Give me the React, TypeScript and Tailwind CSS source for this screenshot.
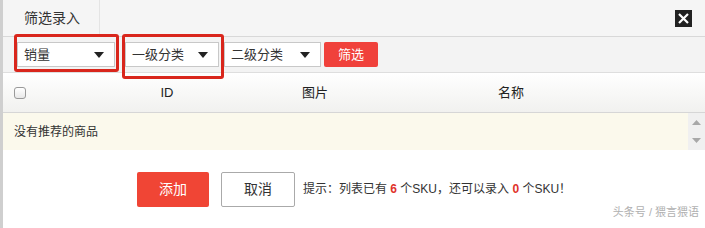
import React from "react";

const font = { fontFamily: '"Liberation Sans", "Noto Sans CJK SC", sans-serif' };

const Caret = () => (
  <svg width="10" height="6" viewBox="0 0 10 6" className="shrink-0">
    <path d="M0 0h10L5 6z" fill="#222" />
  </svg>
);

const Select = ({ label, width }: { label: string; width: string }) => (
  <div
    className={`flex h-[25px] ${width} items-center justify-between border border-[#c8c8c8] bg-white pl-[6px] pr-[10px] text-[13px] text-[#333]`}
  >
    <span>{label}</span>
    <Caret />
  </div>
);

export default function App() {
  return (
    <div className="flex h-[228px] w-[705px] bg-[#cfcfcf] text-[#333]" style={font}>
      <div className="ml-[3px] flex flex-1 flex-col bg-white">
        {/* header */}
        <div className="flex h-[37px] items-center justify-between border-b border-[#d8d8d8] bg-[#f5f5f5]">
          <div className="flex h-full w-[97px] items-center border-r border-[#e4e4e4] pl-[21px] text-[14px] text-[#333]">
            筛选录入
          </div>
          <div className="mr-[13px] flex h-[17px] w-[17px] items-center justify-center bg-[#222]">
            <svg width="11" height="11" viewBox="0 0 11 11">
              <path d="M1 1l9 9M10 1l-9 9" stroke="#fff" strokeWidth="2.2" />
            </svg>
          </div>
        </div>

        {/* filters */}
        <div className="flex h-[36px] items-center border-b border-[#dedede] bg-[#f3f3f3] pl-[14px]">
          <div className="relative">
            <Select label="销量" width="w-[98px]" />
            <div className="pointer-events-none absolute -left-[3px] -top-[8px] h-[38px] w-[105px] rounded-[3px] border-[3px] border-[#d9261c]" />
          </div>
          <div className="relative ml-[10px]">
            <Select label="一级分类" width="w-[94px]" />
            <div className="pointer-events-none absolute -left-[3px] -top-[8px] h-[45px] w-[102px] rounded-[3px] border-[3px] border-[#d9261c]" />
          </div>
          <div className="ml-[5px]">
            <Select label="二级分类" width="w-[97px]" />
          </div>
          <button className="ml-[3px] h-[25px] w-[54px] rounded-[2px] bg-[#f0413b] text-[13px] text-white">
            筛选
          </button>
        </div>

        {/* table header */}
        <div className="flex h-[40px] items-center border-b border-[#d6d6d6] bg-gradient-to-b from-white to-[#f1f1ef] text-[13px] text-[#222]">
          <div className="ml-[11px] h-[12px] w-[12px] rounded-[3px] border border-[#999] bg-gradient-to-b from-white to-[#e8e8e8]" />
          <div className="ml-[126px] w-[30px] text-center">ID</div>
          <div className="ml-[118px] w-[30px] text-center">图片</div>
          <div className="ml-[166px] w-[30px] text-center">名称</div>
        </div>

        {/* body */}
        <div className="flex h-[37px]">
          <div className="flex flex-1 items-center bg-[#fbf9ec] pl-[11px] text-[12px] text-[#333]">
            没有推荐的商品
          </div>
          <div className="flex w-[17px] flex-col items-center justify-between bg-[#f0f0f0] py-[7px]">
            <svg width="9" height="5" viewBox="0 0 9 5">
              <path d="M0 5h9L4.5 0z" fill="#a8a8a8" />
            </svg>
            <svg width="9" height="5" viewBox="0 0 9 5">
              <path d="M0 0h9L4.5 5z" fill="#a8a8a8" />
            </svg>
          </div>
        </div>

        {/* footer */}
        <div className="relative flex flex-1 items-center pl-[134px]">
          <button className="h-[35px] w-[72px] rounded-[2px] bg-[#f04535] text-[14px] text-white">
            添加
          </button>
          <button className="ml-[12px] h-[35px] w-[74px] rounded-[2px] border border-[#aaa] bg-white text-[14px] text-[#333]">
            取消
          </button>
          <div className="ml-[8px] text-[12px] text-[#333]">
            提示：列表已有 <b className="text-[#e0322b]">6</b> 个SKU，还可以录入{" "}
            <b className="text-[#e0322b]">0</b> 个SKU！
          </div>
          <div className="absolute bottom-[8px] right-[6px] text-[11px] text-[#b0b0b0]">
            头条号 / 猥言猥语
          </div>
        </div>
      </div>
    </div>
  );
}
